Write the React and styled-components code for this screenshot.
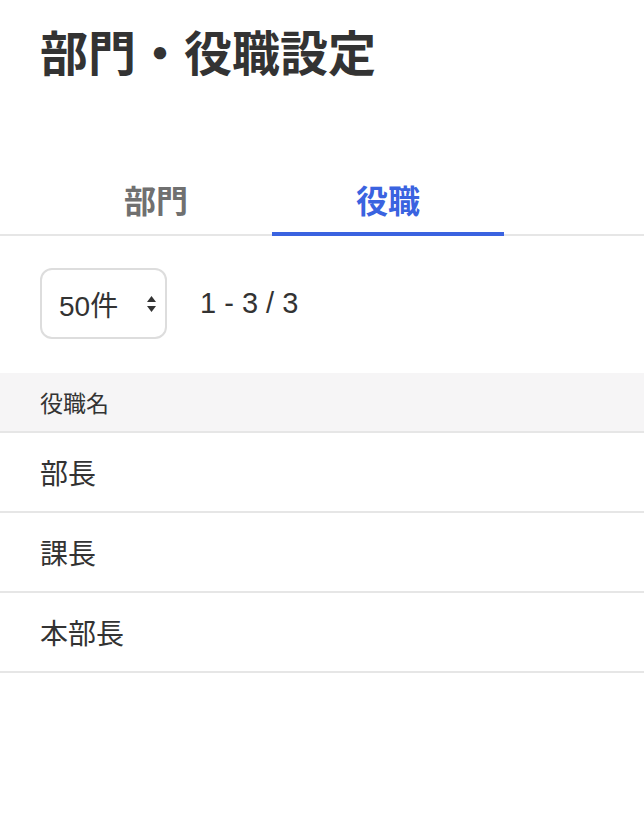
import React, { useState } from 'react';
import styled, { createGlobalStyle } from 'styled-components';

const GlobalStyle = createGlobalStyle`
  html, body {
    margin: 0;
    padding: 0;
    background: #fff;
  }
  body {
    font-family: "Liberation Sans", "Noto Sans CJK JP", sans-serif;
    color: #333;
  }
`;

const Page = styled.div`
  width: 644px;
  padding-top: 26px;
`;

const Title = styled.h1`
  margin: 0;
  padding-left: 40px;
  font-size: 48px;
  line-height: 58px;
  font-weight: 700;
  color: #333;
`;

const TabBar = styled.div`
  display: flex;
  margin-top: 98px;
  padding-left: 40px;
  border-bottom: 2px solid #e6e6e6;
`;

const Tab = styled.button`
  width: 232px;
  margin: 0 0 -2px;
  padding: 0 0 10px;
  border: none;
  border-bottom: 4px solid ${p => (p.$active ? '#3a63e0' : 'transparent')};
  background: none;
  font-family: inherit;
  font-size: 32px;
  line-height: 40px;
  font-weight: 700;
  color: ${p => (p.$active ? '#3a63e0' : '#707070')};
  cursor: pointer;
`;

const Toolbar = styled.div`
  display: flex;
  align-items: center;
  gap: 33px;
  margin-top: 32px;
  padding-left: 40px;
`;

const SelectBox = styled.div`
  box-sizing: border-box;
  width: 127px;
  height: 71px;
  display: flex;
  align-items: center;
  justify-content: space-between;
  padding: 0 8px 0 17px;
  border: 2px solid #dddddd;
  border-radius: 12px;
  font-size: 28px;
  color: #333;
`;

const Count = styled.span`
  font-size: 29px;
  color: #333;
`;

const Table = styled.div`
  margin-top: 34px;
`;

const HeadRow = styled.div`
  height: 60px;
  display: flex;
  align-items: center;
  padding-left: 40px;
  background: #f6f5f6;
  border-bottom: 2px solid #e6e6e6;
  box-sizing: border-box;
  font-size: 23px;
  color: #333;
`;

const Row = styled.div`
  height: 80px;
  display: flex;
  align-items: center;
  padding-left: 40px;
  border-bottom: 2px solid #e6e6e6;
  box-sizing: border-box;
  font-size: 28px;
  color: #333;
`;

const Arrows = () => (
  <svg width="11" height="18" viewBox="0 0 11 18">
    <path d="M5.5 1 L10 7 L1 7 Z" fill="#333" />
    <path d="M5.5 17 L10 11 L1 11 Z" fill="#333" />
  </svg>
);

const positions = ['部長', '課長', '本部長'];

export default function App() {
  const [tab, setTab] = useState('position');

  return (
    <Page>
      <GlobalStyle />
      <Title>部門・役職設定</Title>
      <TabBar>
        <Tab $active={tab === 'dept'} onClick={() => setTab('dept')}>部門</Tab>
        <Tab $active={tab === 'position'} onClick={() => setTab('position')}>役職</Tab>
      </TabBar>
      <Toolbar>
        <SelectBox>
          <span>50件</span>
          <Arrows />
        </SelectBox>
        <Count>1 - 3 / 3</Count>
      </Toolbar>
      <Table>
        <HeadRow>役職名</HeadRow>
        {positions.map(name => (
          <Row key={name}>{name}</Row>
        ))}
      </Table>
    </Page>
  );
}
